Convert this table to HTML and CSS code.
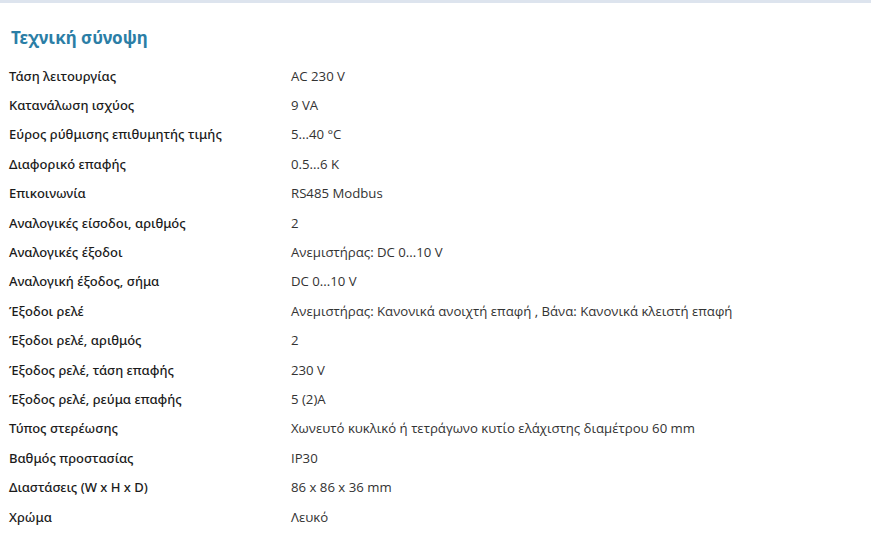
FILE: index.html
```html
<!DOCTYPE html>
<html lang="el">
<head>
<meta charset="utf-8">
<link rel="stylesheet" href="styles.css">
</head>
<body>
<div class="topbar"></div>
<section class="overview">
  <h2 class="title">Τεχνική σύνοψη</h2>
  <dl class="specs">
    <div class="row"><dt>Τάση λειτουργίας</dt><dd>AC 230 V</dd></div>
    <div class="row"><dt>Κατανάλωση ισχύος</dt><dd>9 VA</dd></div>
    <div class="row"><dt>Εύρος ρύθμισης επιθυμητής τιμής</dt><dd>5...40 °C</dd></div>
    <div class="row"><dt>Διαφορικό επαφής</dt><dd>0.5...6 K</dd></div>
    <div class="row"><dt>Επικοινωνία</dt><dd>RS485 Modbus</dd></div>
    <div class="row"><dt>Αναλογικές είσοδοι, αριθμός</dt><dd>2</dd></div>
    <div class="row"><dt>Αναλογικές έξοδοι</dt><dd>Ανεμιστήρας: DC 0...10 V</dd></div>
    <div class="row"><dt>Αναλογική έξοδος, σήμα</dt><dd>DC 0...10 V</dd></div>
    <div class="row"><dt>Έξοδοι ρελέ</dt><dd>Ανεμιστήρας: Κανονικά ανοιχτή επαφή , Βάνα: Κανονικά κλειστή επαφή</dd></div>
    <div class="row"><dt>Έξοδοι ρελέ, αριθμός</dt><dd>2</dd></div>
    <div class="row"><dt>Έξοδος ρελέ, τάση επαφής</dt><dd>230 V</dd></div>
    <div class="row"><dt>Έξοδος ρελέ, ρεύμα επαφής</dt><dd>5 (2)A</dd></div>
    <div class="row"><dt>Τύπος στερέωσης</dt><dd>Χωνευτό κυκλικό ή τετράγωνο κυτίο ελάχιστης διαμέτρου 60 mm</dd></div>
    <div class="row"><dt>Βαθμός προστασίας</dt><dd>IP30</dd></div>
    <div class="row"><dt>Διαστάσεις (W x H x D)</dt><dd>86 x 86 x 36 mm</dd></div>
    <div class="row"><dt>Χρώμα</dt><dd>Λευκό</dd></div>
  </dl>
</section>
</body>
</html>
```
FILE: styles.css
```css
html, body {
  margin: 0;
  padding: 0;
  background: #ffffff;
}
.topbar {
  height: 3px;
  background: #dde4ee;
}
.overview {
  padding: 0 0 0 9px;
}
.title {
  margin: 0;
  padding: 24px 0 0 2px;
  height: 28px;
  font-family: "Noto Sans", sans-serif;
  font-size: 17px;
  font-weight: 700;
  color: #2b7ea6;
  line-height: 22px;
}
.specs {
  margin: 0;
  padding: 6px 0 0 0;
}
.row {
  display: grid;
  grid-template-columns: 282px 1fr;
  height: 29.4px;
  align-items: center;
}
.row dt {
  margin: 0;
  font-family: "Noto Sans", sans-serif;
  font-size: 13px;
  font-weight: 500;
  color: #1b1b1b;
}
.row dd {
  margin: 0;
  font-family: "Open Sans", sans-serif;
  font-size: 13.2px;
  color: #333333;
}
```
